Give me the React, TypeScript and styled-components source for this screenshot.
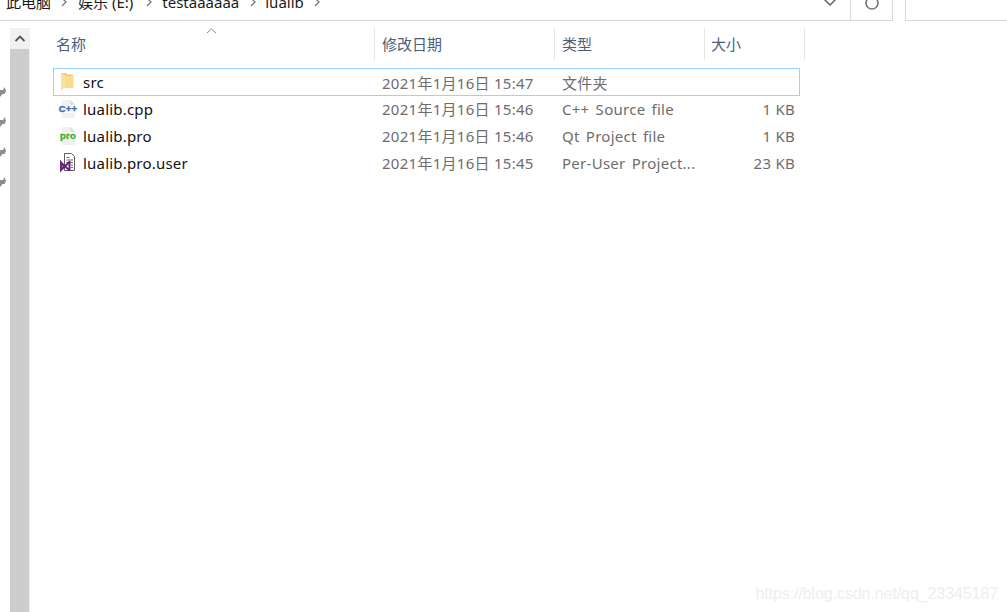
import React from 'react'
import styled, { createGlobalStyle } from 'styled-components'

const GlobalStyle = createGlobalStyle`
    html, body {
        margin: 0;
        padding: 0;
        background: #fff;
    }
    body {
        font-family: "Noto Sans", "Noto Sans CJK SC", sans-serif;
    }
`

const Page = styled.div`
    position: relative;
    width: 1007px;
    height: 612px;
    overflow: hidden;
    display: flex;
    flex-direction: column;
`

const TopBar = styled.div`
    display: flex;
    gap: 12px;
    height: 21px;
    flex: none;
`

const AddressBox = styled.div`
    width: 892px;
    display: flex;
    border-bottom: 1px solid #d9d9d9;
    border-right: 1px solid #d9d9d9;
`

const Breadcrumbs = styled.div`
    width: 850px;
    height: 20px;
    padding: 0 0 0 6px;
    box-sizing: border-box;
    display: flex;
    align-items: flex-start;
    justify-content: space-between;
    overflow: hidden;
`

const CrumbList = styled.div`
    display: flex;
    align-items: center;
    height: 20px;
    margin-top: -8px;
    flex: none;
`

const Crumb = styled.span<{ $gap: number }>`
    font-size: 15px;
    line-height: 20px;
    color: #1a1a1a;
    white-space: nowrap;
    margin-right: ${p => p.$gap}px;
`

const CrumbChevron = styled.svg<{ $gap: number }>`
    width: 8px;
    height: 10px;
    flex: none;
    margin-right: ${p => p.$gap}px;
`

const Dropdown = styled.svg`
    width: 14px;
    height: 8px;
    margin: -2px 13px 0 0;
    flex: none;
`

const RefreshBox = styled.div`
    width: 41px;
    height: 20px;
    border-left: 1px solid #d9d9d9;
    display: flex;
    justify-content: center;
    overflow: hidden;
`

const SearchBox = styled.div`
    flex: 1;
    border-left: 1px solid #d9d9d9;
    border-bottom: 1px solid #d9d9d9;
`

const Body = styled.div`
    flex: 1;
    display: flex;
    padding-top: 7px;
    min-height: 0;
`

const PinColumn = styled.div`
    width: 10px;
    flex: none;
    display: flex;
    flex-direction: column;
    gap: 20px;
    padding-top: 59px;
    box-sizing: border-box;
`

const Pin = styled.svg`
    width: 6px;
    height: 10px;
    display: block;
`

const ScrollBar = styled.div`
    width: 19px;
    flex: none;
    display: flex;
    flex-direction: column;
    background: #cdcdcd;
    border-right: 1px solid #f0f0f0;
`

const ScrollButton = styled.div`
    height: 21px;
    flex: none;
    background: #f0f0f0;
    display: flex;
    align-items: center;
    justify-content: center;
`

const List = styled.div`
    flex: 1;
    padding-left: 23px;
`

const HeaderRow = styled.div`
    position: relative;
    display: grid;
    grid-template-columns: 322px 180px 150px 100px;
    height: 32px;
`

const HeaderCell = styled.div<{ $pad: number }>`
    box-sizing: border-box;
    border-right: 1px solid #e5e5e5;
    padding-left: ${p => p.$pad}px;
    font-size: 15px;
    line-height: 32px;
    color: #4c607a;
    white-space: nowrap;
`

const SortArrow = styled.svg`
    position: absolute;
    left: 153px;
    top: 0;
    width: 11px;
    height: 6px;
`

const Rows = styled.div`
    padding-top: 8px;
`

const Row = styled.div<{ $selected?: boolean }>`
    box-sizing: border-box;
    display: grid;
    grid-template-columns: 321px 180px 150px 96px;
    width: 747px;
    height: ${p => (p.$selected ? 28 : 27)}px;
    margin-bottom: ${p => (p.$selected ? -1 : 0)}px;
    border: 1px solid ${p => (p.$selected ? '#99d1ff' : 'transparent')};
    align-items: center;
`

const NameCell = styled.div`
    display: flex;
    align-items: center;
    gap: 6px;
    padding-left: 5px;
    font-size: 15px;
    letter-spacing: 0.2px;
    color: #111;
`

const IconSlot = styled.svg`
    width: 18px;
    height: 18px;
    flex: none;
    overflow: visible;
`

const Cell = styled.div<{ $right?: boolean, $spaced?: boolean }>`
    box-sizing: border-box;
    font-size: 15px;
    letter-spacing: 0.27px;
    word-spacing: ${p => (p.$spaced ? 2 : 0)}px;
    color: #6d6d6d;
    white-space: nowrap;
    padding: ${p => (p.$right ? '0 6px 0 0' : '0 0 0 7px')};
    text-align: ${p => (p.$right ? 'right' : 'left')};
`

const Watermark = styled.div`
    position: absolute;
    right: 9px;
    bottom: 9px;
    font-family: "Liberation Sans", sans-serif;
    font-size: 16px;
    letter-spacing: -0.09px;
    line-height: 18px;
    color: #eeeeee;
`

const FolderIcon = () =>
    <IconSlot viewBox="0 0 18 18">
        <path d="M2 0h5l1 1.500h6V15H6z" fill="#f2c85f" />
        <path d="M6 3h8.500v12H6z" fill="#fbdc8a" />
        <path d="M2 0l4 2.500V15l-4 2.500z" fill="#f6e3a6" />
    </IconSlot>

const PageIcon = ({ label, color }: { label: string, color: string }) =>
    <IconSlot viewBox="0 0 18 18">
        <path d="M3 0h8.500L16 4.500V18H3z" fill="#f1f1f1" />
        <path d="M11.500 0v4.500H16z" fill="#dcdcdc" />
        <rect x="1" y="5" width="17" height="8" fill="#f9f9f9" />
        <text x="9" y="12" textAnchor="middle" fontFamily="Liberation Sans, sans-serif"
            fontSize="9.500" fontWeight="700" stroke={ color } strokeWidth="0.4" fill={ color }>{ label }</text>
    </IconSlot>

const UserIcon = () =>
    <IconSlot viewBox="0 0 18 18">
        <path d="M5.500-.5h7l3 3v14h-10z" fill="#fff" stroke="#5c5c5c" />
        <path d="M7.500 3.500h3M7.500 6h6.500M7.500 8.500h6.500M12 11h2M12 13.500h2" stroke="#6b6b6b" />
        <path d="M2 8.500v7.500l2.800-3.700zM2 8.500l8 7.500M2 16l8-7.500" fill="none" stroke="#68217a" strokeWidth="1.900" />
        <path d="M10.500 7v10" stroke="#68217a" strokeWidth="2" />
    </IconSlot>

const crumbs = [
    { text: '此电脑', before: 9, after: 10 },
    { text: '娱乐 (E:)', before: 12, after: 9 },
    { text: 'testaaaaaa', before: 10, after: 8 },
    { text: 'lualib', before: 9, after: 0 }
]

const rows = [
    { name: 'src', date: '2021年1月16日 15:47', type: '文件夹', size: '', icon: <FolderIcon />, selected: true },
    { name: 'lualib.cpp', date: '2021年1月16日 15:46', type: 'C++ Source file', size: '1 KB', icon: <PageIcon label="C++" color="#3f6fb5" /> },
    { name: 'lualib.pro', date: '2021年1月16日 15:46', type: 'Qt Project file', size: '1 KB', icon: <PageIcon label="pro" color="#41b02c" /> },
    { name: 'lualib.pro.user', date: '2021年1月16日 15:45', type: 'Per-User Project...', size: '23 KB', icon: <UserIcon /> }
]

export default function App() {
    return (
        <Page>
            <GlobalStyle />
            <TopBar>
                <AddressBox>
                    <Breadcrumbs>
                        <CrumbList>
                            { crumbs.map(c =>
                                <React.Fragment key={ c.text }>
                                    <Crumb $gap={ c.before }>{ c.text }</Crumb>
                                    <CrumbChevron $gap={ c.after } viewBox="0 0 8 10">
                                        <path d="M2 1l4 4-4 4" fill="none" stroke="#777" strokeWidth="1.300" />
                                    </CrumbChevron>
                                </React.Fragment>
                            ) }
                        </CrumbList>
                        <Dropdown viewBox="0 0 14 8">
                            <path d="M1 1l6 6 6-6" fill="none" stroke="#666" strokeWidth="1.500" />
                        </Dropdown>
                    </Breadcrumbs>
                    <RefreshBox>
                        <svg width="16" height="20" viewBox="0 0 16 20">
                            <circle cx="8" cy="3" r="6" fill="none" stroke="#777" strokeWidth="1.600" />
                        </svg>
                    </RefreshBox>
                </AddressBox>
                <SearchBox />
            </TopBar>
            <Body>
                <PinColumn>
                    { [0, 1, 2, 3].map(i =>
                        <Pin key={ i } viewBox="0 0 6 10">
                            <path d="M0 3h3l1.500-3L6 4 4.500 7H2.500L0 10z" fill="#8a8f96" />
                        </Pin>
                    ) }
                </PinColumn>
                <ScrollBar>
                    <ScrollButton>
                        <svg width="10" height="7" viewBox="0 0 10 7">
                            <path d="M.5 6L5 1.500 9.500 6" fill="none" stroke="#505050" strokeWidth="1.800" />
                        </svg>
                    </ScrollButton>
                </ScrollBar>
                <List>
                    <HeaderRow>
                        <HeaderCell $pad={ 3 }>名称</HeaderCell>
                        <HeaderCell $pad={ 7 }>修改日期</HeaderCell>
                        <HeaderCell $pad={ 7 }>类型</HeaderCell>
                        <HeaderCell $pad={ 6 }>大小</HeaderCell>
                        <SortArrow viewBox="0 0 11 6">
                            <path d="M1 5l4.500-4 4.500 4" fill="none" stroke="#8a8a8a" />
                        </SortArrow>
                    </HeaderRow>
                    <Rows>
                        { rows.map(r =>
                            <Row key={ r.name } $selected={ r.selected }>
                                <NameCell>{ r.icon }{ r.name }</NameCell>
                                <Cell>{ r.date }</Cell>
                                <Cell $spaced>{ r.type }</Cell>
                                <Cell $right>{ r.size }</Cell>
                            </Row>
                        ) }
                    </Rows>
                </List>
            </Body>
            <Watermark>https://blog.csdn.net/qq_23345187</Watermark>
        </Page>
    )
}
